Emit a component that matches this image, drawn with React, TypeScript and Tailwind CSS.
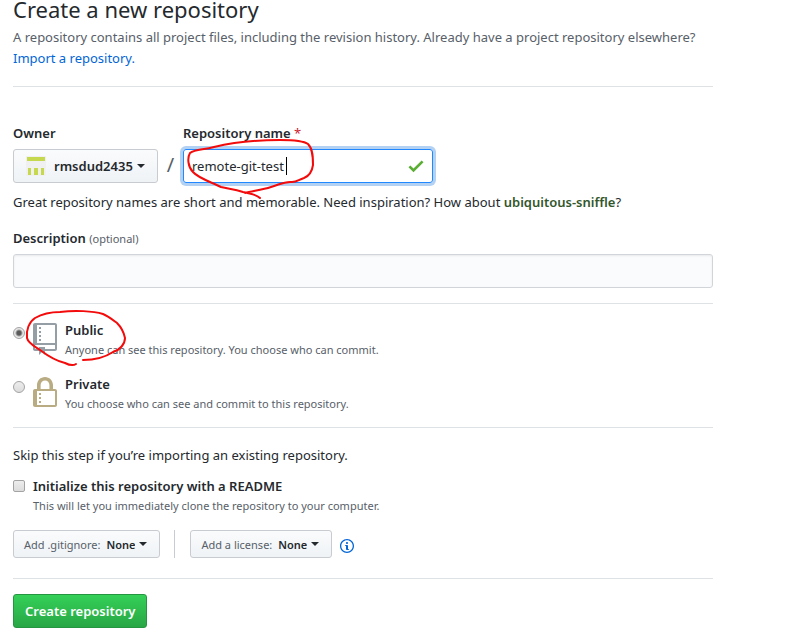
import type { ReactNode } from "react";

const REPO =
  "M4 9H3V8h1v1zm0-3H3v1h1V6zm0-2H3v1h1V4zm0-2H3v1h1V2zm8-1v12c0 .55-.45 1-1 1H6v2l-1.5-1.5L3 16v-2H1c-.55 0-1-.45-1-1V1c0-.55.45-1 1-1h10c.55 0 1 .45 1 1zm-1 10H1v2h2v-1h3v1h5v-2zm0-10H2v9h9V1z";
const LOCK =
  "M4 13H3v-1h1v1zm8-6v7c0 .55-.45 1-1 1H1c-.55 0-1-.45-1-1V7c0-.55.45-1 1-1h1V4c0-2.2 1.8-4 4-4s4 1.8 4 4v2h1c.55 0 1 .45 1 1zM3.8 6h4.41V4c0-1.22-.98-2.2-2.2-2.2-1.22 0-2.2.98-2.2 2.2v2H3.8zM11 7H2v7h9V7zM4 8H3v1h1V8zm0 2H3v1h1v-1z";
const INFO =
  "M6.3 5.69a.942.942 0 0 1-.28-.7c0-.28.09-.52.28-.7.19-.18.42-.28.7-.28.28 0 .52.09.7.28.18.19.28.42.28.7 0 .28-.09.52-.28.7a1 1 0 0 1-.7.3c-.28 0-.52-.11-.7-.3zM8 7.99c-.02-.25-.11-.48-.31-.69-.2-.19-.42-.3-.69-.31H6c-.27.02-.48.13-.69.31-.2.2-.3.44-.31.69h1v3c.02.27.11.5.31.69.2.2.42.31.69.31h1c.27 0 .48-.11.69-.31.2-.19.3-.42.31-.69H8V7.98v.01zM7 2.3c-3.14 0-5.7 2.54-5.7 5.68 0 3.14 2.56 5.7 5.7 5.7s5.7-2.55 5.7-5.7c0-3.15-2.56-5.69-5.7-5.69v.01zM7 .98c3.86 0 7 3.14 7 7s-3.14 7-7 7-7-3.12-7-7 3.14-7 7-7z";

function Caret() {
  return (
    <svg className="pointer-events-none h-1 w-2 shrink-0" viewBox="0 0 8 4" aria-hidden="true">
      <path d="M0 0h8L4 4z" fill="#24292e" />
    </svg>
  );
}

function Rule() {
  return <hr className="border-[#dfe2e5]" />;
}

function Avatar() {
  return (
    <svg className="size-5 shrink-0" viewBox="0 0 20 20" aria-hidden="true">
      <rect width="20" height="20" fill="#f0f0f0" />
      <path d="M1 1h18v4H1zM2 12h3v7H2zM8 12h4v7H8zM15 12h3v7h-3z" fill="#c6d84e" />
    </svg>
  );
}

function SmallSelect({ id, label, options }: { id: string; label: string; options: string[] }) {
  return (
    <div className="flex h-7 items-center rounded-[3px] border border-[#c8cbcf] bg-linear-to-b from-[#fafbfc] to-[#eff3f6] pr-3 pl-2.5 text-[11px]">
      <label htmlFor={id} className="mr-1.5 text-[#586069]">
        {label}
      </label>
      <select id={id} className="mr-1 field-sizing-content appearance-none font-semibold outline-none">
        {options.map((o) => (
          <option key={o}>{o}</option>
        ))}
      </select>
      <Caret />
    </div>
  );
}

function Visibility({
  id,
  title,
  icon,
  color,
  checked,
  children,
}: {
  id: string;
  title: string;
  icon: string;
  color: string;
  checked?: boolean;
  children: ReactNode;
}) {
  return (
    <div className="flex">
      <input
        id={id}
        type="radio"
        name="visibility"
        defaultChecked={checked}
        className="mt-[5px] size-3 shrink-0 appearance-none rounded-full border border-[#a3a3a3] bg-linear-to-b from-[#ededed] to-[#dcdcdc] checked:bg-[radial-gradient(circle,#5a5a5a_0_2px,#e8e8e8_4px)]"
      />
      <svg className={`mt-px ml-2 h-8 w-6 shrink-0 ${color}`} viewBox="0 0 12 16" fill="currentColor" aria-hidden="true">
        <path d={icon} />
      </svg>
      <div className="ml-2">
        <label htmlFor={id} className="block text-[13px] leading-4 font-semibold">
          {title}
        </label>
        <p className="mt-1 text-[11px] leading-4 text-[#586069]">{children}</p>
      </div>
    </div>
  );
}

export default function App() {
  return (
    <main className="relative min-h-screen bg-white px-[13px] pb-4 font-['Noto_Sans','Open_Sans',sans-serif] text-[13px] leading-[21px] text-[#24292e]">
      <form className="max-w-[700px]" onSubmit={(e) => e.preventDefault()}>
        <h1 className="pb-[9px] text-[22px] leading-[18px]">Create a new repository</h1>
        <p className="text-[#586069]">
          A repository contains all project files, including the revision history. Already have a project repository
          elsewhere?{" "}
          <a href="#import" className="block text-[#0366d6]">
            Import a repository.
          </a>
        </p>
        <div className="pt-[17px] pb-9">
          <Rule />
        </div>

        <div className="flex">
          <div className="w-[145px]">
            <label htmlFor="owner" className="block font-semibold">
              Owner
            </label>
            <div className="mt-[5px] flex h-[34px] items-center rounded-[3px] border border-[#c8cbcf] bg-linear-to-b from-[#fafbfc] to-[#eff3f6] pl-3">
              <Avatar />
              <select id="owner" className="mr-1 ml-2 field-sizing-content appearance-none font-semibold outline-none">
                <option>rmsdud2435</option>
              </select>
              <Caret />
            </div>
          </div>
          <span className="flex w-[25px] items-end justify-center pb-1 text-xl text-[#586069]">/</span>
          <div className="w-[250px]">
            <label htmlFor="repo-name" className="block font-semibold">
              Repository name <span className="font-normal text-[#cb2431]">*</span>
            </label>
            <div className="mt-[5px] flex h-[34px] items-center rounded-[3px] border border-[#2188ff] pr-2 pl-2 shadow-[0_0_0_3px_rgba(3,102,214,0.3)]">
              <input
                id="repo-name"
                type="text"
                defaultValue="remote-git-test"
                className="min-w-0 flex-1 caret-transparent outline-none"
              />
              <svg className="h-5 w-4" viewBox="0 0 12 16" fill="#5aae34" aria-hidden="true">
                <path d="M12 5l-8 8-4-4 1.5-1.5L4 10l6.5-6.5L12 5z" />
              </svg>
            </div>
          </div>
        </div>
        <p className="mt-[9px]">
          Great repository names are short and memorable. Need inspiration? How about{" "}
          <strong className="font-semibold text-[#33572c]">ubiquitous-sniffle</strong>?
        </p>

        <label htmlFor="description" className="mt-[15px] block font-semibold">
          Description <span className="text-[11px] font-normal text-[#586069]">(optional)</span>
        </label>
        <input
          id="description"
          type="text"
          className="mt-[5px] block h-[34px] w-full rounded-[3px] border border-[#d1d5da] bg-[#fafbfc] px-2 shadow-[inset_0_1px_2px_rgba(27,31,35,0.075)] outline-none"
        />

        <div className="pt-[15px] pb-[18px]">
          <Rule />
        </div>
        <div className="flex flex-col gap-[18px]">
          <Visibility id="public" title="Public" icon={REPO} color="text-[#959da5]" checked>
            Anyone can see this repository. You choose who can commit.
          </Visibility>
          <Visibility id="private" title="Private" icon={LOCK} color="text-[#b9ab82]">
            You choose who can see and commit to this repository.
          </Visibility>
        </div>
        <div className="pt-[15px] pb-[17px]">
          <Rule />
        </div>

        <p>Skip this step if you’re importing an existing repository.</p>
        <div className="mt-[11px] flex">
          <input
            id="readme"
            type="checkbox"
            className="mt-[3px] size-3 shrink-0 appearance-none rounded-[2px] border border-[#a3a3a3] bg-linear-to-b from-[#ededed] to-[#dcdcdc]"
          />
          <div className="ml-2">
            <label htmlFor="readme" className="block leading-[18px] font-semibold">
              Initialize this repository with a README
            </label>
            <p className="mt-[3px] text-[11px] leading-4 text-[#586069]">
              This will let you immediately clone the repository to your computer.
            </p>
          </div>
        </div>
        <div className="mt-4 flex items-center">
          <SmallSelect id="gitignore" label="Add .gitignore:" options={["None"]} />
          <div className="mr-[15px] ml-3.5 h-7 w-px bg-[#c8cbcf]" />
          <SmallSelect id="license" label="Add a license:" options={["None"]} />
          <button type="button" aria-label="About licenses" className="mt-1 ml-2 text-[#0366d6]">
            <svg className="h-4 w-3.5" viewBox="0 0 14 16" fill="currentColor" aria-hidden="true">
              <path d={INFO} />
            </svg>
          </button>
        </div>

        <div className="pt-5 pb-[15px]">
          <Rule />
        </div>
        <button
          type="submit"
          className="h-[34px] rounded-[3px] border border-[#269542] bg-linear-to-b from-[#34d058] to-[#28a745] px-[11px] font-semibold text-white"
        >
          Create repository
        </button>
      </form>

      {/* Hand-drawn marker rings and the text cursor, laid over the form */}
      <svg
        className="pointer-events-none absolute top-0 left-0 h-[380px] w-[440px]"
        viewBox="0 0 440 380"
        fill="none"
        stroke="#f30b0b"
        strokeWidth="2"
        strokeLinecap="round"
        strokeLinejoin="round"
        aria-hidden="true"
      >
        <path d="M286 157v18" stroke="#000" strokeWidth="1" strokeLinecap="butt" shapeRendering="crispEdges" />
        <path d="M260 198C256 194 251 194 243 192C234 189 229 189 221 187C211 182 198 178 193 172C188 167 187 158 190 153C195 149 203 150 214 147C231 143 252 140 280 140C293 140 304 141 308 144C313 149 313 158 313 165C312 172 309 176 304 178C298 180 297 182 292 182C284 181 279 185 271 187C262 190 252 191 245 193" />
        <path d="M76 364C73 366 69 365 65 363C56 361 48 356 40 350C34 346 28 343 27 338C26 330 29 322 35 318C42 314 51 312 60 312C75 310 93 311 103 314C108 316 113 320 117 323C122 328 124 333 125 338C125 344 120 350 113 352C104 358 94 360 83 360" />
      </svg>
    </main>
  );
}
